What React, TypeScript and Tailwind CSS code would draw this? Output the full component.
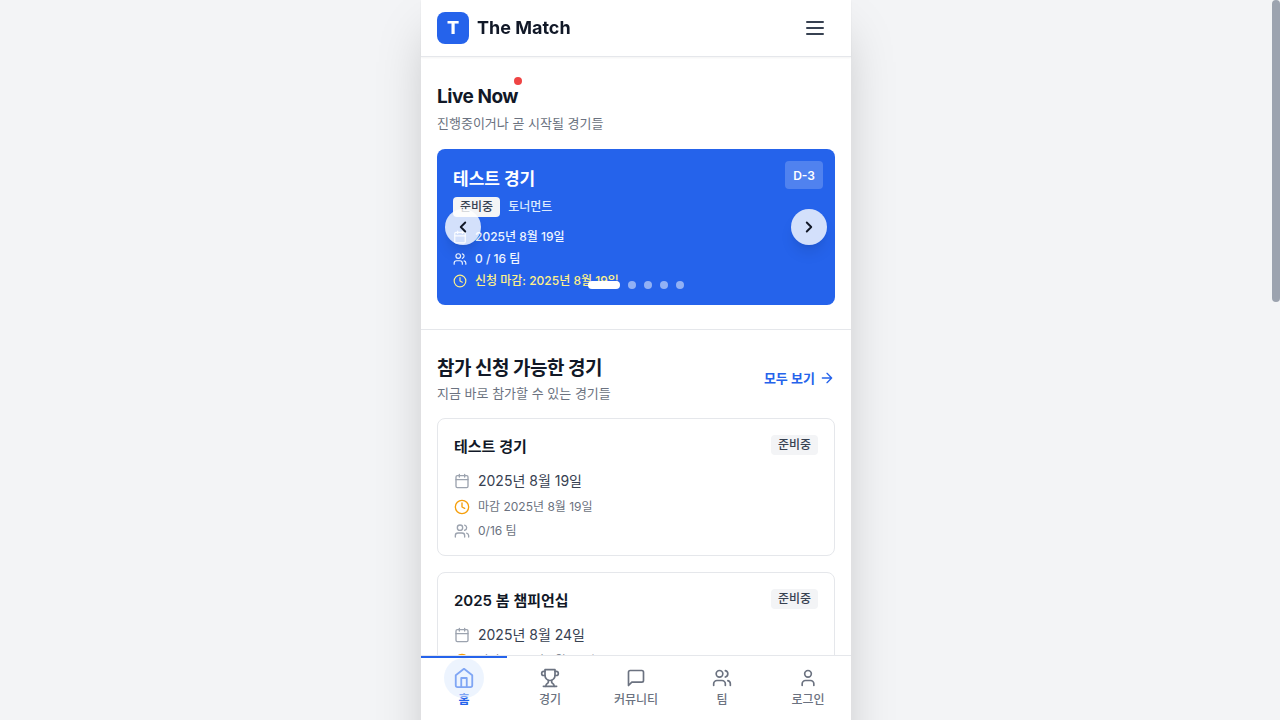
import React from "react";

type IconProps = { className?: string; strokeWidth?: number; children?: React.ReactNode };

function Icon({ className = "size-4", strokeWidth = 2, children }: IconProps) {
  return (
    <svg
      className={`shrink-0 ${className}`}
      viewBox="0 0 24 24"
      fill="none"
      stroke="currentColor"
      strokeWidth={strokeWidth}
      strokeLinecap="round"
      strokeLinejoin="round"
      aria-hidden="true"
    >
      {children}
    </svg>
  );
}

const MenuIcon = (p: IconProps) => (
  <Icon {...p}>
    <path d="M4 6h16M4 12h16M4 18h16" />
  </Icon>
);
const CalendarIcon = (p: IconProps) => (
  <Icon {...p}>
    <path d="M8 2v4M16 2v4M3 10h18" />
    <rect x="3" y="4" width="18" height="18" rx="2" />
  </Icon>
);
const ClockIcon = (p: IconProps) => (
  <Icon {...p}>
    <circle cx="12" cy="12" r="10" />
    <path d="M12 6v6l4 2" />
  </Icon>
);
const UsersIcon = (p: IconProps) => (
  <Icon {...p}>
    <circle cx="9" cy="7" r="4" />
    <path d="M16 21v-2a4 4 0 0 0-4-4H6a4 4 0 0 0-4 4v2M22 21v-2a4 4 0 0 0-3-3.87M16 3.13a4 4 0 0 1 0 7.75" />
  </Icon>
);
const UserIcon = (p: IconProps) => (
  <Icon {...p}>
    <circle cx="12" cy="7" r="4" />
    <path d="M19 21v-2a4 4 0 0 0-4-4H9a4 4 0 0 0-4 4v2" />
  </Icon>
);
const HomeIcon = (p: IconProps) => (
  <Icon {...p}>
    <path d="m3 9 9-7 9 7v11a2 2 0 0 1-2 2H5a2 2 0 0 1-2-2z" />
    <path d="M9 22V12h6v10" />
  </Icon>
);
const TrophyIcon = (p: IconProps) => (
  <Icon {...p}>
    <path d="M6 9H4.5a2.5 2.5 0 0 1 0-5H6M18 9h1.5a2.5 2.5 0 0 0 0-5H18M4 22h16" />
    <path d="M10 14.66V17c0 .55-.47.98-.97 1.21C7.85 18.75 7 20.24 7 22M14 14.66V17c0 .55.47.98.97 1.21C16.15 18.75 17 20.24 17 22" />
    <path d="M18 2H6v7a6 6 0 0 0 12 0z" />
  </Icon>
);
const MessageIcon = (p: IconProps) => (
  <Icon {...p}>
    <path d="M21 15a2 2 0 0 1-2 2H7l-4 4V5a2 2 0 0 1 2-2h14a2 2 0 0 1 2 2z" />
  </Icon>
);
const ChevronLeftIcon = (p: IconProps) => (
  <Icon {...p}>
    <path d="m15 18-6-6 6-6" />
  </Icon>
);
const ChevronRightIcon = (p: IconProps) => (
  <Icon {...p}>
    <path d="m9 18 6-6-6-6" />
  </Icon>
);
const ArrowRightIcon = (p: IconProps) => (
  <Icon {...p}>
    <path d="M5 12h14M12 5l7 7-7 7" />
  </Icon>
);

function StatusBadge() {
  return (
    <span className="shrink-0 rounded bg-[#f3f4f6] px-[7px] py-0.5 text-xs font-medium text-[#374151]">
      준비중
    </span>
  );
}

type Match = { title: string; date: string; deadline: string; teams: string };

const matches: Match[] = [
  { title: "테스트 경기", date: "2025년 8월 19일", deadline: "2025년 8월 19일", teams: "0/16 팀" },
  { title: "2025 봄 챔피언십", date: "2025년 8월 24일", deadline: "2025년 8월 24일", teams: "0/16 팀" },
];

function MatchCard({ match }: { match: Match }) {
  return (
    <article className="rounded-lg border border-[#e5e7eb] bg-white p-4">
      <div className="mb-3 flex items-start justify-between">
        <h3 className="text-[15px] leading-6 font-semibold">{match.title}</h3>
        <StatusBadge />
      </div>
      <div className="flex flex-col gap-2">
        <p className="flex items-center gap-2 text-sm text-[#374151]">
          <CalendarIcon className="size-4 text-[#9ca3af]" />
          {match.date}
        </p>
        <p className="flex items-center gap-2 text-xs text-[#6b7280]">
          <ClockIcon className="size-4 text-[#f59e0b]" />
          마감 {match.deadline}
        </p>
        <p className="flex items-center gap-2 text-xs text-[#6b7280]">
          <UsersIcon className="size-4 text-[#9ca3af]" />
          {match.teams}
        </p>
      </div>
    </article>
  );
}

const tabs = [
  { label: "경기", icon: TrophyIcon },
  { label: "커뮤니티", icon: MessageIcon },
  { label: "팀", icon: UsersIcon },
  { label: "로그인", icon: UserIcon },
];

export default function App() {
  return (
    <div className="relative h-screen overflow-hidden bg-[#f3f4f6] pr-2 font-['Inter','Noto_Sans_CJK_KR',sans-serif] text-[#111827] antialiased">
      <div className="relative isolate mx-auto flex h-full max-w-[430px] flex-col bg-white before:absolute before:inset-x-0 before:top-0 before:-bottom-24 before:-z-10 before:shadow-2xl">
        <header className="z-20 flex shrink-0 items-center justify-between border-b border-[#e5e7eb] bg-white px-4 py-2 shadow-xs">
          <a href="#home" className="flex items-center gap-2">
            <span className="flex size-8 items-center justify-center rounded-lg bg-[#2563eb] text-lg font-extrabold text-white">
              T
            </span>
            <span className="text-lg font-bold">The Match</span>
          </a>
          <button type="button" aria-label="메뉴" className="p-2 text-[#374151]">
            <MenuIcon className="size-6" />
          </button>
        </header>

        <main className="min-h-0 flex-1 overflow-y-auto bg-white [scrollbar-width:none]">
          <section className="border-b border-[#e5e7eb] px-4 py-6">
            <h2 className="relative w-fit text-[19px] leading-8 font-bold tracking-tight">
              Live Now
              <span className="absolute -top-1 -right-1 size-2 rounded-full bg-[#ef4444]" />
            </h2>
            <p className="mb-4 text-[13px] leading-5 text-[#6b7280]">진행중이거나 곧 시작될 경기들</p>

            <div className="relative rounded-lg bg-[#2563eb] p-4 text-white">
              <h3 className="mb-1 text-[17px] leading-7 font-bold">테스트 경기</h3>
              <div className="mb-3 flex items-center gap-2 text-xs font-medium text-[#dbeafe]">
                <StatusBadge />
                토너먼트
              </div>
              <div className="flex flex-col gap-1.5 text-xs font-medium text-[#eff6ff]">
                <p className="flex items-center gap-2">
                  <CalendarIcon className="size-3.5" />
                  2025년 8월 19일
                </p>
                <p className="flex items-center gap-2">
                  <UsersIcon className="size-3.5" />0 / 16 팀
                </p>
                <p className="flex items-center gap-2 text-[#fef08a]">
                  <ClockIcon className="size-3.5" />
                  신청 마감: 2025년 8월 19일
                </p>
              </div>
              <span className="absolute top-3 right-3 rounded bg-white/20 px-2 pt-[7px] pb-[5px] text-xs font-semibold">
                D-3
              </span>
              <button
                type="button"
                aria-label="이전 경기"
                className="absolute top-1/2 left-2 flex size-9 -translate-y-1/2 items-center justify-center rounded-full bg-white/80 text-[#111827] shadow-lg"
              >
                <ChevronLeftIcon className="size-[18px]" strokeWidth={2.5} />
              </button>
              <button
                type="button"
                aria-label="다음 경기"
                className="absolute top-1/2 right-2 flex size-9 -translate-y-1/2 items-center justify-center rounded-full bg-white/80 text-[#111827] shadow-lg"
              >
                <ChevronRightIcon className="size-[18px]" strokeWidth={2.5} />
              </button>
              <div className="absolute inset-x-0 bottom-4 flex justify-center gap-2">
                <button type="button" aria-label="슬라이드 1" className="h-2 w-8 rounded-full bg-white" />
                {[2, 3, 4, 5].map((n) => (
                  <button
                    key={n}
                    type="button"
                    aria-label={`슬라이드 ${n}`}
                    className="size-2 rounded-full bg-white/50"
                  />
                ))}
              </div>
            </div>
          </section>

          <section className="px-4 py-6">
            <div className="mb-4 flex items-center justify-between">
              <div>
                <h2 className="text-[19px] leading-[30px] font-bold tracking-tight">참가 신청 가능한 경기</h2>
                <p className="text-[13px] leading-[18px] text-[#6b7280]">지금 바로 참가할 수 있는 경기들</p>
              </div>
              <a
                href="#matches"
                className="flex items-center gap-1 text-[13px] leading-5 font-semibold text-[#2563eb]"
              >
                모두 보기
                <ArrowRightIcon className="size-4" />
              </a>
            </div>
            <div className="flex flex-col gap-4">
              {matches.map((m) => (
                <MatchCard key={m.title} match={m} />
              ))}
            </div>
          </section>
        </main>

        <nav className="z-20 grid h-[65px] shrink-0 grid-cols-5 border-t border-[#e5e7eb] bg-white text-xs font-medium text-[#6b7280]">
          <a
            href="#home"
            aria-current="page"
            className="relative flex flex-col items-center justify-center gap-1 font-bold text-[#2563eb]"
          >
            <HomeIcon className="size-5 scale-110" />
            홈
            <span className="absolute inset-x-0 top-0 h-0.5 bg-[#2563eb]" />
            <span className="absolute top-0.5 size-10 rounded-full bg-[#dbeafe]/50" />
          </a>
          {tabs.map(({ label, icon: TabIcon }) => (
            <a key={label} href="#tab" className="flex flex-col items-center justify-center gap-1">
              <TabIcon className="size-5" />
              {label}
            </a>
          ))}
        </nav>
      </div>
      <div aria-hidden="true" className="absolute top-0 right-0 h-[302px] w-2 rounded-full bg-[#9ca3af]" />
    </div>
  );
}
